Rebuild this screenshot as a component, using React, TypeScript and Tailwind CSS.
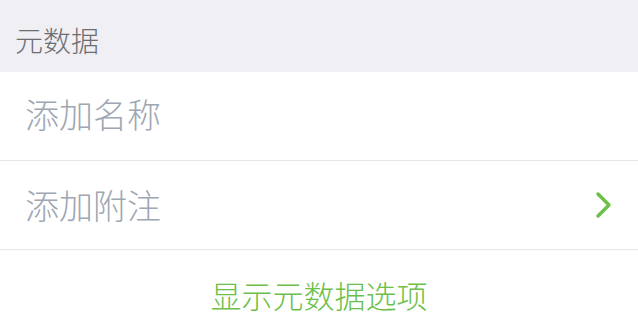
export default function App() {
  const font = { fontFamily: '"Noto Sans CJK SC", "Noto Sans", sans-serif' };
  return (
    <div className="w-[638px] h-[325px] bg-white overflow-hidden" style={font}>
      <div className="h-[72px] bg-[#efeff4] pl-[15px] pt-[26px]">
        <span className="text-[28px] leading-none font-light text-[#6d6d72]">元数据</span>
      </div>
      <div className="h-[89px] flex items-center pl-[25px] border-b border-[#e6e6e8]">
        <span className="text-[34px] leading-none font-light text-[#9ea7b3] -mt-[5px]">添加名称</span>
      </div>
      <div className="h-[89px] flex items-center justify-between pl-[25px] pr-[24px] border-b border-[#e6e6e8]">
        <span className="text-[34px] leading-none font-light text-[#9ea7b3]">添加附注</span>
        <svg width="20" height="30" viewBox="0 0 20 30" fill="none">
          <path d="M4 4 L15 15 L4 26" stroke="#6cc04a" strokeWidth="3.5" strokeLinecap="round" strokeLinejoin="round" />
        </svg>
      </div>
      <div className="flex justify-center pt-[29px]">
        <span className="text-[31px] leading-none font-light text-[#6cc04a]">显示元数据选项</span>
      </div>
    </div>
  );
}
